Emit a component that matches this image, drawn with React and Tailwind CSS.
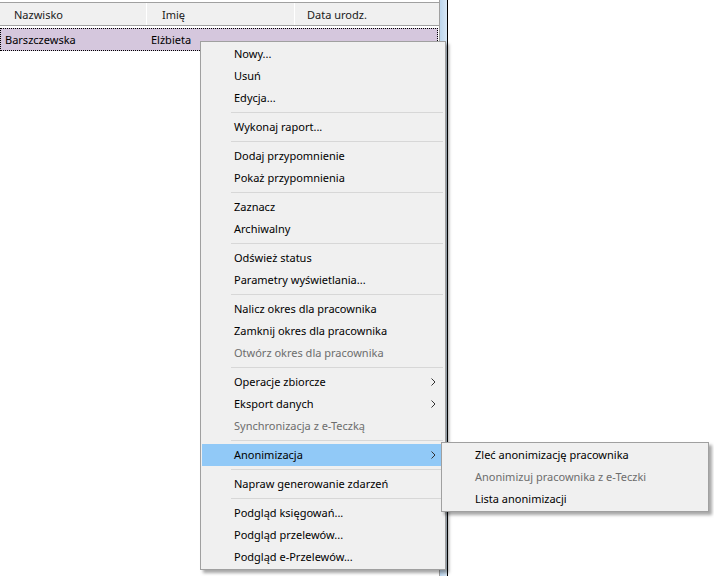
import React from "react";

const items = [
  { t: "Nowy..." },
  { t: "Usuń" },
  { t: "Edycja..." },
  { sep: true },
  { t: "Wykonaj raport..." },
  { sep: true },
  { t: "Dodaj przypomnienie" },
  { t: "Pokaż przypomnienia" },
  { sep: true },
  { t: "Zaznacz" },
  { t: "Archiwalny" },
  { sep: true },
  { t: "Odśwież status" },
  { t: "Parametry wyświetlania..." },
  { sep: true },
  { t: "Nalicz okres dla pracownika" },
  { t: "Zamknij okres dla pracownika" },
  { t: "Otwórz okres dla pracownika", dis: true },
  { sep: true },
  { t: "Operacje zbiorcze", sub: true },
  { t: "Eksport danych", sub: true },
  { t: "Synchronizacja z e-Teczką", dis: true },
  { sep: true },
  { t: "Anonimizacja", sub: true, hl: true },
  { sep: true },
  { t: "Napraw generowanie zdarzeń" },
  { sep: true },
  { t: "Podgląd księgowań..." },
  { t: "Podgląd przelewów..." },
  { t: "Podgląd e-Przelewów..." },
];

const subItems = [
  { t: "Zleć anonimizację pracownika" },
  { t: "Anonimizuj pracownika z e-Teczki", dis: true },
  { t: "Lista anonimizacji" },
];

function Chevron() {
  return (
    <svg width="5" height="8" viewBox="0 0 5 8" className="block mt-[2px]">
      <path d="M0.5 0.5 L4 4 L0.5 7.5" fill="none" stroke="#333" strokeWidth="1" />
    </svg>
  );
}

function MenuItem({ it }) {
  if (it.sep) {
    return (
      <div className="h-[7px] flex items-center pl-[29px] pr-[2px]">
        <div className="h-px w-full bg-[#d7d7d7]" />
      </div>
    );
  }
  return (
    <div
      className={
        "h-[22px] flex items-center pl-[32px] pr-[9px] pb-[2px] " +
        (it.hl ? "bg-[#91c9f7] " : "") +
        (it.dis ? "text-[#6d6d6d]" : "text-black")
      }
    >
      <span className="flex-1 whitespace-nowrap">{it.t}</span>
      {it.sub && <Chevron />}
    </div>
  );
}

export default function App() {
  return (
    <div
      className="relative w-[714px] h-[576px] bg-white overflow-hidden text-[11px] leading-none"
      style={{ fontFamily: '"Noto Sans", "Liberation Sans", sans-serif' }}
    >
      <div className="flex h-full">
        {/* grid */}
        <div className="w-[440px] h-full border-r border-[#a0a0a0] pt-[2px]">
          <div className="flex h-[24px] bg-[#f0f0f0] border-t border-b border-[#a0a0a0] text-[#1a1a1a]">
            <div className="w-[147px] border-r border-white flex items-center pl-[14px]">Nazwisko</div>
            <div className="w-[148px] border-r border-white flex items-center pl-[15px]">Imię</div>
            <div className="flex-1 flex items-center pl-[12px]">Data urodz.</div>
          </div>
          <div className="mt-[2px] mr-[1px] h-[23px] flex items-center bg-[#d5c7dd] border border-dotted border-black">
            <div className="w-[146px] pl-[4px]">Barszczewska</div>
            <div className="pl-[4px]">Elżbieta</div>
          </div>
        </div>
        <div className="w-[7px] h-full bg-gradient-to-r from-[#bcd6ee] to-[#d8e7f5]" />
        <div className="w-px h-full bg-black" />
        <div className="flex-1" />
      </div>

      {/* main context menu */}
      <div className="absolute left-[200px] top-[41px] w-[246px] bg-[#f0f0f0] border border-[#a0a0a0] py-px pl-px shadow-[3px_3px_3px_rgba(0,0,0,0.35)]">
        {items.map((it, i) => (
          <MenuItem key={i} it={it} />
        ))}
      </div>

      {/* submenu */}
      <div className="absolute left-[441px] top-[442px] w-[268px] bg-[#f0f0f0] border border-[#a0a0a0] pt-px pb-px shadow-[3px_3px_3px_rgba(0,0,0,0.35)]">
        {subItems.map((it, i) => (
          <div
            key={i}
            className={
              "h-[22px] flex items-center pl-[33px] pb-[2px] whitespace-nowrap " +
              (it.dis ? "text-[#6d6d6d]" : "text-black")
            }
          >
            {it.t}
          </div>
        ))}
      </div>
    </div>
  );
}
